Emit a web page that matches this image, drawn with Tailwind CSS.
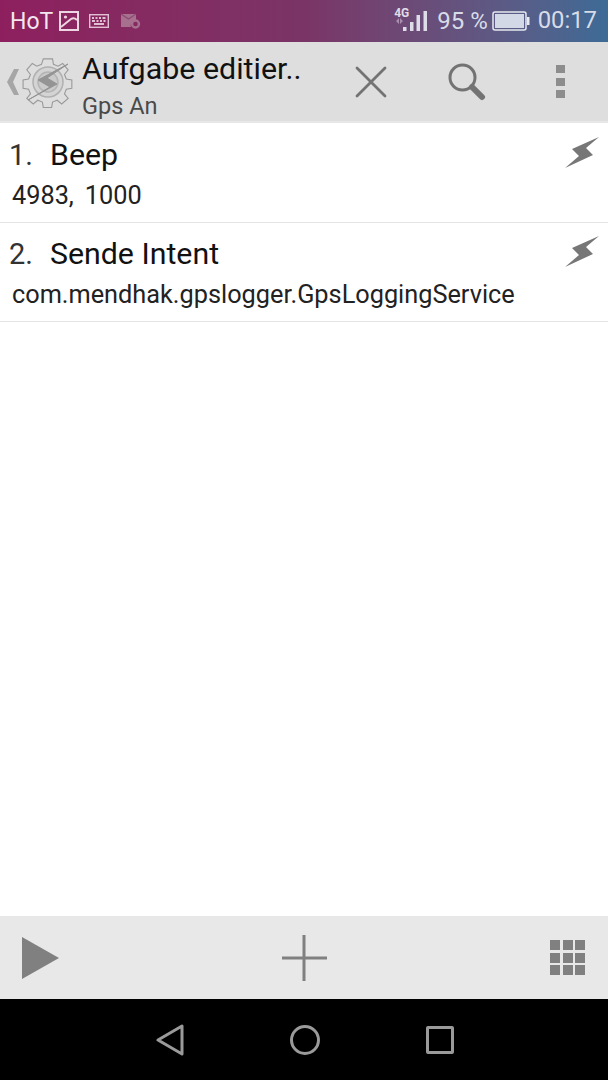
<!DOCTYPE html>
<html lang="en">
<head>
  <meta charset="UTF-8" />
  <meta name="viewport" content="width=device-width, initial-scale=1" />
  <title>Aufgabe editieren</title>
  <script src="https://cdn.jsdelivr.net/npm/@tailwindcss/browser@4"></script>
</head>
<body class="bg-white font-['Roboto',sans-serif]">
  <div class="w-[608px] h-[1080px] flex flex-col overflow-hidden">

    <!-- Status bar -->
    <div class="h-[42px] flex items-center pl-[10px] pr-[11px] bg-gradient-to-r from-[#8e1f5e] via-[#7a3466] to-[#3c6b96] text-[#d8dce8]">
      <span class="text-[23px] leading-none text-[#f4e6ee]">HoT</span>
      <svg class="ml-[6px]" width="20" height="20" viewBox="0 0 20 20" fill="none" stroke="#eed5e2" stroke-width="2">
        <rect x="1" y="1" width="18" height="18" />
        <path d="M2 16 L12 8 Q15 6 18 9" />
        <circle cx="6.5" cy="6" r="1.6" fill="#eed5e2" stroke="none" />
      </svg>
      <svg class="ml-[10px]" width="20" height="14" viewBox="0 0 20 14" fill="none">
        <rect x="0.7" y="0.7" width="18.6" height="12.6" stroke="#e2c0d4" stroke-width="1.4" />
        <path d="M3 4h2M6.500 4h2M10 4h2M13.500 4h3M3 7h3M7.500 7h2M11 7h2M14.500 7h2M5 10h10" stroke="#e2c0d4" stroke-width="1.800" />
      </svg>
      <svg class="ml-[12px]" width="20" height="16" viewBox="0 0 20 16">
        <path d="M0 1h15v6.500a5 5 0 0 0-5 6.500H0z" fill="#a8708f" />
        <path d="M0 1l7.500 5L15 1" stroke="#8a4a72" stroke-width="1.200" fill="none" />
        <circle cx="14.500" cy="11" r="3.500" fill="none" stroke="#a8708f" stroke-width="2.400" />
      </svg>

      <div class="ml-auto relative w-[34px] h-[30px]">
        <span class="absolute left-0 top-[1px] text-[12px] font-bold leading-none text-[#e0dde8]">4G</span>
        <svg class="absolute left-0 top-[-6px]" width="34" height="32" viewBox="0 0 34 32" fill="#dcdde8">
          <path d="M2 21l3-3v6zM6 18l3 3-3 3z" fill="#a98cae" />
          <rect x="9" y="27" width="3.500" height="4" />
          <rect x="16" y="22" width="3.500" height="9" />
          <rect x="22.500" y="15" width="3.500" height="16" />
          <rect x="29.500" y="11" width="3.500" height="20" />
        </svg>
      </div>
      <span class="ml-[9px] text-[24px] leading-none whitespace-nowrap">95 %</span>
      <svg class="ml-[4px]" width="38" height="20" viewBox="0 0 38 20">
        <rect x="1" y="1" width="33" height="18" rx="2" fill="none" stroke="#e6e9f0" stroke-width="1.500" />
        <rect x="3" y="3" width="29" height="14" fill="#d3d8e6" />
        <rect x="35" y="6" width="2.500" height="8" fill="#e6e9f0" />
      </svg>
      <span class="ml-[8px] text-[23.8px] leading-none">00:17</span>
    </div>

    <!-- Action bar -->
    <div class="h-[81px] flex items-center bg-[#dedede] border-b-2 border-[#e7e7e7]">
      <svg class="ml-[7px]" width="12" height="26" viewBox="0 0 12 26">
        <path d="M7 0 L0 13 L7 26 H12 L6 13 L12 0z" fill="#a6a6a6" />
      </svg>
      <svg class="ml-[3px]" width="52" height="52" viewBox="0 0 52 52" fill="none">
        <path d="M21 2h10l1 6 5 2 5-3 6 7-4 5 2 5 6 1v9l-6 1-2 5 4 5-7 6-5-4-5 2-1 6H21l-1-6-5-2-5 4-7-6 4-5-2-5-6-1v-9l6-1 2-5-4-5 6-7 5 3 5-2z" transform="translate(2 1) scale(.92)" stroke="#9a9a9a" stroke-width="1.200" />
        <circle cx="26" cy="26" r="15" fill="#d4d4d4" stroke="#b0b0b0" stroke-width="1.500" />
        <circle cx="26" cy="26" r="10" fill="#cacaca" stroke="#b4b4b4" stroke-width="1.500" />
        <path d="M46 8 L16 24 L28 31 L6 44 L35 28 L25 22z" fill="#949494" stroke="#949494" stroke-width="1" />
      </svg>
      <div class="ml-[8px] w-[246px] pt-[6px] flex flex-col">
        <span class="text-[30.4px] leading-[36px] text-[#111] whitespace-nowrap">Aufgabe editier..</span>
        <span class="text-[23.5px] leading-[26px] mt-[6px] text-[#4a4a4a]">Gps An</span>
      </div>
      <svg class="ml-[27px]" width="32" height="32" viewBox="0 0 32 32" stroke="#737373" stroke-width="2.800" stroke-linecap="round">
        <path d="M2 2L30 30M30 2L2 30" />
      </svg>
      <svg class="ml-[61px]" width="38" height="38" viewBox="0 0 38 38" fill="none">
        <circle cx="14.500" cy="14.500" r="12.500" stroke="#737373" stroke-width="3" />
        <path d="M24 24L34 34" stroke="#737373" stroke-width="6" stroke-linecap="round" />
      </svg>
      <div class="ml-[70px] flex flex-col gap-[4.500px]">
        <div class="w-[9px] h-[8px] bg-[#8d8d8d]"></div>
        <div class="w-[9px] h-[8px] bg-[#8d8d8d]"></div>
        <div class="w-[9px] h-[8px] bg-[#8d8d8d]"></div>
      </div>
    </div>

    <!-- Action list -->
    <div class="flex-1 bg-white">
      <div class="h-[100px] relative border-b border-[#e4e4e4] pl-[9px]">
        <div class="flex items-baseline pt-[14px] leading-[36px]">
          <span class="w-[41px] text-[29px] text-[#333]">1.</span>
          <span class="text-[30.3px] text-[#111]">Beep</span>
        </div>
        <div class="flex gap-[11px] pl-[3px] mt-[8px] text-[25.3px] leading-[30px] text-[#222]"><span>4983,</span><span>1000</span></div>
        <svg class="absolute right-[8px] top-[13px]" width="36" height="33" viewBox="0 0 36 33">
          <path d="M35 1 L8 13 L15 20 L1 32 L29 19 L22 12z" fill="#777" />
        </svg>
      </div>
      <div class="h-[99px] relative border-b border-[#e4e4e4] pl-[9px]">
        <div class="flex items-baseline pt-[13px] leading-[36px]">
          <span class="w-[41px] text-[29px] text-[#333]">2.</span>
          <span class="text-[30.3px] text-[#111]">Sende Intent</span>
        </div>
        <div class="pl-[3px] mt-[8px] text-[25.3px] leading-[30px] text-[#222]">com.mendhak.gpslogger.GpsLoggingService</div>
        <svg class="absolute right-[8px] top-[12px]" width="36" height="33" viewBox="0 0 36 33">
          <path d="M35 1 L8 13 L15 20 L1 32 L29 19 L22 12z" fill="#777" />
        </svg>
      </div>
    </div>

    <!-- Bottom toolbar -->
    <div class="h-[83px] flex items-center justify-between pl-[22px] pr-[23px] bg-[#e8e8e8]">
      <svg width="37" height="42" viewBox="0 0 37 42"><path d="M0 0L37 21L0 42z" fill="#808080" /></svg>
      <svg width="46" height="46" viewBox="0 0 46 46" fill="#808080">
        <rect x="20.500" y="0" width="3" height="46" />
        <rect x="0" y="21.500" width="45" height="3" />
      </svg>
      <div class="grid grid-cols-3 gap-[2.500px]">
        <div class="w-[10px] h-[10px] bg-[#808080]"></div>
        <div class="w-[10px] h-[10px] bg-[#808080]"></div>
        <div class="w-[10px] h-[10px] bg-[#808080]"></div>
        <div class="w-[10px] h-[10px] bg-[#808080]"></div>
        <div class="w-[10px] h-[10px] bg-[#808080]"></div>
        <div class="w-[10px] h-[10px] bg-[#808080]"></div>
        <div class="w-[10px] h-[10px] bg-[#808080]"></div>
        <div class="w-[10px] h-[10px] bg-[#808080]"></div>
        <div class="w-[10px] h-[10px] bg-[#808080]"></div>
      </div>
    </div>

    <!-- Navigation bar -->
    <div class="h-[81px] bg-black flex items-center pl-[156px]">
      <svg width="28" height="32" viewBox="0 0 28 32" fill="none">
        <path d="M2 16L26 2V30z" stroke="#9a9a9a" stroke-width="3" stroke-linejoin="round" />
      </svg>
      <svg class="ml-[106px]" width="30" height="30" viewBox="0 0 30 30" fill="none">
        <circle cx="15" cy="15" r="13.500" stroke="#9a9a9a" stroke-width="3" />
      </svg>
      <div class="ml-[106px] w-[28px] h-[28px] border-[3px] border-[#9a9a9a] rounded-[2px]"></div>
    </div>
  </div>
</body>
</html>
